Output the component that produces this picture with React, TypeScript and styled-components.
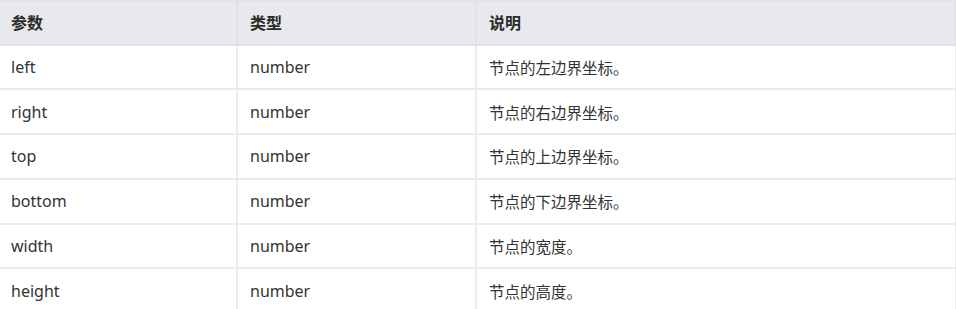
import React from "react";
import styled, { createGlobalStyle } from "styled-components";

const Global = createGlobalStyle`
  html, body { margin: 0; padding: 0; background: #ffffff; }
  body { font-family: "Noto Sans", "Noto Sans CJK SC", sans-serif; }
`;

const Table = styled.table`
  width: 956px;
  border-collapse: collapse;
  table-layout: fixed;
  color: #333333;
  font-size: 16px;
  th:first-child, td:first-child { border-left: 0; padding-left: 11px; }
`;

const HeadCell = styled.th<{ $w: number }>`
  width: ${(p) => p.$w}px;
  height: 44px;
  box-sizing: border-box;
  padding: 0 11px 0 12px;
  text-align: left;
  font-weight: 700;
  font-size: 16px;
  background: #e8e9ec;
  border: 2px solid #e2e2e4;
  border-top-width: 1px;
  font-family: "Noto Sans CJK SC", sans-serif;
  color: #2b2b2b;
`;

const Cell = styled.td`
  height: 42.8px;
  box-sizing: content-box;
  padding: 0 11px 0 12px;
  border: 2px solid #ebebeb;
  vertical-align: middle;
`;

const Desc = styled(Cell)`
  font-family: "Noto Sans CJK SC", sans-serif;
  font-size: 15.5px;
`;

const rows: [string, string, string][] = [
  ["left", "number", "节点的左边界坐标。"],
  ["right", "number", "节点的右边界坐标。"],
  ["top", "number", "节点的上边界坐标。"],
  ["bottom", "number", "节点的下边界坐标。"],
  ["width", "number", "节点的宽度。"],
  ["height", "number", "节点的高度。"],
];

export default function App() {
  return (
    <>
      <Global />
      <Table>
        <thead>
          <tr>
            <HeadCell $w={237}>参数</HeadCell>
            <HeadCell $w={239}>类型</HeadCell>
            <HeadCell $w={480}>说明</HeadCell>
          </tr>
        </thead>
        <tbody>
          {rows.map(([a, b, c]) => (
            <tr key={a}>
              <Cell>{a}</Cell>
              <Cell>{b}</Cell>
              <Desc>{c}</Desc>
            </tr>
          ))}
        </tbody>
      </Table>
    </>
  );
}
